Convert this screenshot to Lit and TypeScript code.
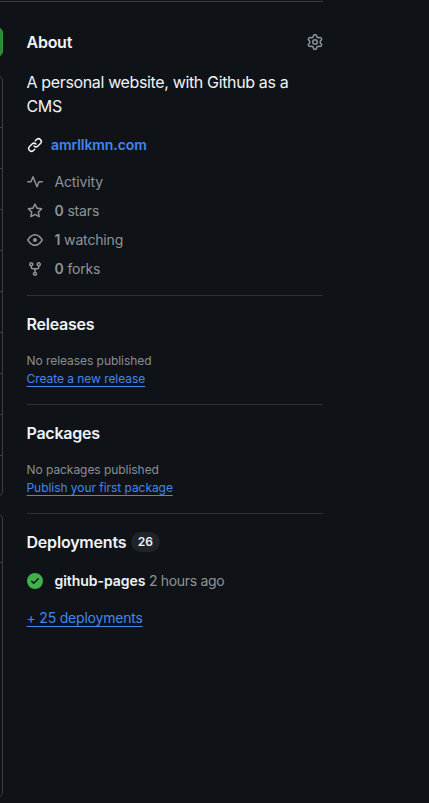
import { LitElement, html, css, svg } from "lit";
import { customElement } from "lit/decorators.js";

const paths = {
  gear: "M8 0a8.2 8.2 0 0 1 .701.031C9.444.095 9.99.645 10.16 1.29l.288 1.107c.018.066.079.158.212.224.231.114.454.243.668.386.123.082.233.09.299.071l1.103-.303c.644-.176 1.392.021 1.82.63.27.385.506.792.704 1.218.315.675.111 1.422-.364 1.891l-.814.806c-.049.048-.098.147-.088.294.016.257.016.515 0 .772-.01.147.038.246.088.294l.814.806c.475.469.679 1.216.364 1.891a7.977 7.977 0 0 1-.704 1.217c-.428.61-1.176.807-1.82.63l-1.102-.302c-.067-.019-.177-.011-.3.071a5.909 5.909 0 0 1-.668.386c-.133.066-.194.158-.211.224l-.29 1.106c-.168.646-.715 1.196-1.458 1.26a8.006 8.006 0 0 1-1.402 0c-.743-.064-1.289-.614-1.458-1.26l-.289-1.106c-.018-.066-.079-.158-.212-.224a5.738 5.738 0 0 1-.668-.386c-.123-.082-.233-.09-.299-.071l-1.103.303c-.644.176-1.392-.021-1.82-.63a8.12 8.12 0 0 1-.704-1.218c-.315-.675-.111-1.422.363-1.891l.815-.806c.05-.048.098-.147.088-.294a6.214 6.214 0 0 1 0-.772c.01-.147-.038-.246-.088-.294l-.815-.806C.635 6.045.431 5.298.746 4.623a7.92 7.92 0 0 1 .704-1.217c.428-.61 1.176-.807 1.82-.63l1.102.302c.067.019.177.011.3-.071.214-.143.437-.272.668-.386.133-.066.194-.158.211-.224l.29-1.106C6.009.645 6.556.095 7.299.03 7.53.01 7.764 0 8 0Zm-.571 1.525c-.036.003-.108.036-.137.146l-.289 1.105c-.147.561-.549.967-.998 1.189-.173.086-.34.183-.5.29-.417.278-.97.423-1.529.27l-1.103-.303c-.109-.03-.175.016-.195.045-.22.312-.412.644-.573.99-.014.031-.021.11.059.19l.815.806c.411.406.562.957.53 1.456a4.709 4.709 0 0 0 0 .582c.032.499-.119 1.05-.53 1.456l-.815.806c-.081.08-.073.159-.059.19.162.346.353.677.573.989.02.03.085.076.195.046l1.102-.303c.56-.153 1.113-.008 1.53.27.161.107.328.204.501.29.447.222.85.629.997 1.189l.289 1.105c.029.109.101.143.137.146a6.6 6.6 0 0 0 1.142 0c.036-.003.108-.036.137-.146l.289-1.105c.147-.561.549-.967.998-1.189.173-.086.34-.183.5-.29.417-.278.97-.423 1.529-.27l1.103.303c.109.029.175-.016.195-.045.22-.313.411-.644.573-.99.014-.031.021-.11-.059-.19l-.815-.806c-.411-.406-.562-.957-.53-1.456a4.709 4.709 0 0 0 0-.582c-.032-.499.119-1.05.53-1.456l.815-.806c.081-.08.073-.159.059-.19a6.464 6.464 0 0 0-.573-.989c-.02-.03-.085-.076-.195-.046l-1.102.303c-.56.153-1.113.008-1.53-.27a4.44 4.44 0 0 0-.501-.29c-.447-.222-.85-.629-.997-1.189l-.289-1.105c-.029-.11-.101-.143-.137-.146a6.6 6.6 0 0 0-1.142 0ZM11 8a3 3 0 1 1-6 0 3 3 0 0 1 6 0ZM9.5 8a1.5 1.5 0 1 0-3.001.001A1.5 1.5 0 0 0 9.5 8Z",
  link: "m7.775 3.275 1.25-1.25a3.5 3.5 0 1 1 4.95 4.95l-2.5 2.5a3.5 3.5 0 0 1-4.95 0 .751.751 0 0 1 .018-1.042.751.751 0 0 1 1.042-.018 1.998 1.998 0 0 0 2.83 0l2.5-2.5a2.002 2.002 0 0 0-2.83-2.83l-1.25 1.25a.751.751 0 0 1-1.042-.018.751.751 0 0 1-.018-1.042Zm-4.69 9.64a1.998 1.998 0 0 0 2.83 0l1.25-1.25a.751.751 0 0 1 1.042.018.751.751 0 0 1 .018 1.042l-1.25 1.25a3.5 3.5 0 1 1-4.95-4.95l2.5-2.5a3.5 3.5 0 0 1 4.95 0 .751.751 0 0 1-.018 1.042.751.751 0 0 1-1.042.018 1.998 1.998 0 0 0-2.83 0l-2.5 2.5a1.998 1.998 0 0 0 0 2.83Z",
  pulse: "M6 2c.306 0 .582.187.696.471L10 10.731l1.304-3.26A.751.751 0 0 1 12 7h3.25a.75.75 0 0 1 0 1.5h-2.742l-1.812 4.528a.751.751 0 0 1-1.392 0L6 4.77 4.696 8.03A.75.75 0 0 1 4 8.5H.75a.75.75 0 0 1 0-1.5h2.742l1.812-4.529A.751.751 0 0 1 6 2Z",
  star: "M8 .25a.75.75 0 0 1 .673.418l1.882 3.815 4.21.612a.75.75 0 0 1 .416 1.279l-3.046 2.97.719 4.192a.751.751 0 0 1-1.088.791L8 12.347l-3.766 1.98a.75.75 0 0 1-1.088-.79l.72-4.194L.818 6.374a.75.75 0 0 1 .416-1.28l4.21-.611L7.327.668A.75.75 0 0 1 8 .25Zm0 2.445L6.615 5.5a.75.75 0 0 1-.564.41l-3.097.45 2.24 2.184a.75.75 0 0 1 .216.664l-.528 3.084 2.769-1.456a.75.75 0 0 1 .698 0l2.77 1.456-.53-3.084a.75.75 0 0 1 .216-.664l2.24-2.183-3.096-.45a.75.75 0 0 1-.564-.41L8 2.694Z",
  eye: "M8 2c1.981 0 3.671.992 4.933 2.078 1.27 1.091 2.187 2.345 2.637 3.023a1.62 1.62 0 0 1 0 1.798c-.45.678-1.367 1.932-2.637 3.023C11.67 13.008 9.981 14 8 14c-1.981 0-3.671-.992-4.933-2.078C1.797 10.83.88 9.576.43 8.898a1.62 1.62 0 0 1 0-1.798c.45-.677 1.367-1.931 2.637-3.022C4.33 2.992 6.019 2 8 2ZM1.679 7.932a.12.12 0 0 0 0 .136c.411.622 1.241 1.75 2.366 2.717C5.176 11.758 6.527 12.5 8 12.5c1.473 0 2.825-.742 3.955-1.715 1.124-.967 1.954-2.096 2.366-2.717a.12.12 0 0 0 0-.136c-.412-.621-1.242-1.75-2.366-2.717C10.824 4.242 9.473 3.5 8 3.5c-1.473 0-2.825.742-3.955 1.715-1.124.967-1.954 2.096-2.366 2.717ZM8 10a2 2 0 1 1-.001-3.999A2 2 0 0 1 8 10Z",
  fork: "M5 5.372v.878c0 .414.336.75.75.75h4.5a.75.75 0 0 0 .75-.75v-.878a2.25 2.25 0 1 1 1.5 0v.878a2.25 2.25 0 0 1-2.25 2.25h-1.5v2.128a2.251 2.251 0 1 1-1.5 0V8.5h-1.5A2.25 2.25 0 0 1 3.5 6.25v-.878a2.25 2.25 0 1 1 1.5 0ZM5 3.25a.75.75 0 1 0-1.5 0 .75.75 0 0 0 1.5 0Zm6.75.75a.75.75 0 1 0 0-1.5.75.75 0 0 0 0 1.5Zm-3 8.75a.75.75 0 1 0-1.5 0 .75.75 0 0 0 1.5 0Z",
  check: "M8 16A8 8 0 1 1 8 0a8 8 0 0 1 0 16Zm3.78-9.72a.751.751 0 0 0-.018-1.042.751.751 0 0 0-1.042-.018L6.75 9.19 5.28 7.72a.751.751 0 0 0-1.042.018.751.751 0 0 0-.018 1.042l2 2a.75.75 0 0 0 1.06 0Z",
};

const icon = (name: keyof typeof paths) =>
  html`<svg class="icon ${name}" viewBox="0 0 16 16" aria-hidden="true">${svg`<path d=${paths[name]}></path>`}</svg>`;

@customElement("app-root")
export class AppRoot extends LitElement {
  static styles = css`
    * { box-sizing: border-box; }
    :host {
      display: block;
      height: 803px;
      overflow: hidden;
      background: #0f1317;
      color: #f0f3f8;
      font: 400 14px/21px Inter, "Liberation Sans", sans-serif;
    }
    .top { width: 323px; height: 2px; border-bottom: 1px solid #393d43; }
    .page { display: grid; grid-template-columns: 3px 296.5px; column-gap: 23.5px; }
    .main { overflow: hidden; display: flex; flex-direction: column; align-items: flex-end; padding-top: 25px; }
    .main > * { width: 30px; flex: none; }
    .code { height: 30px; background: #2b8a37; border: 1px solid #3b9346; border-radius: 6px; }
    .box { border: 1px solid #3a3e44; border-radius: 6px; }
    .files { margin-top: 18px; height: 422px; }
    .row { height: 41px; border-bottom: 1px solid #3a3e44; }
    .row:first-child { height: 52px; }
    .readme { margin-top: 16px; height: 285px; }
    .readme .row { height: 49px; }
    .side { padding-top: 28px; }
    section { border-bottom: 1px solid #2b2f35; padding-bottom: 16px; margin-bottom: 16px; }
    section:last-child { border: 0; }
    h2 { margin: 0 0 16px; font-size: 16px; line-height: 24px; font-weight: 600; letter-spacing: -0.25px; }
    .head { display: flex; justify-content: space-between; }
    .head .icon { margin-top: 4px; color: #8c929b; }
    .desc { margin: 0 0 16px; font-size: 16px; line-height: 24px; letter-spacing: -0.355px; }
    .icon { width: 16px; height: 16px; flex: none; fill: currentColor; display: block; }
    .line { display: flex; align-items: center; height: 21px; color: #8f9399; letter-spacing: -0.15px; }
    .line + .line { margin-top: 8px; }
    .line .icon { margin-right: 12px; }
    .line b { font-weight: 600; }
    .line.site { color: #f0f3f8; margin-bottom: 16px; letter-spacing: -0.07px; }
    .line.site .icon { margin-right: 8.5px; }
    a { color: #4485f0; text-decoration: none; }
    .site a { font-weight: 600; }
    .small { font-size: 12px; line-height: 18px; color: #8a8e94; letter-spacing: -0.05px; }
    .small a, .more a { text-decoration: underline; text-decoration-thickness: 1px; text-underline-offset: 3px; }
    .count {
      display: inline-block; height: 20px; min-width: 29px; padding: 0 6px; border-radius: 10px;
      background: #202429; font-size: 12px; line-height: 20px; text-align: center; letter-spacing: 0;
    }
    h2.titled { display: flex; align-items: center; gap: 4.5px; height: 24px; letter-spacing: -0.2px; }
    .line.deploy { letter-spacing: -0.32px; }
    .line .check { color: #3fb24c; }
    .line .env { color: #f0f3f8; letter-spacing: -0.05px; }
    .more { margin-top: 16px; letter-spacing: -0.2px; }
  `;

  render() {
    return html`
      <div class="top"></div>
      <div class="page">
        <div class="main">
          <div class="code"></div>
          <div class="box files">${Array.from({ length: 9 }, () => html`<div class="row"></div>`)}</div>
          <div class="box readme"><div class="row"></div></div>
        </div>
        <aside class="side">
          <section>
            <div class="head"><h2>About</h2>${icon("gear")}</div>
            <p class="desc">A personal website, with Github as a CMS</p>
            <div class="line site">${icon("link")}<a>amrllkmn.com</a></div>
            <div class="line">${icon("pulse")}<span>Activity</span></div>
            <div class="line">${icon("star")}<span><b>0</b> stars</span></div>
            <div class="line">${icon("eye")}<span><b>1</b> watching</span></div>
            <div class="line">${icon("fork")}<span><b>0</b> forks</span></div>
          </section>
          <section>
            <h2>Releases</h2>
            <div class="small">No releases published</div>
            <div class="small"><a>Create a new release</a></div>
          </section>
          <section>
            <h2>Packages</h2>
            <div class="small">No packages published</div>
            <div class="small"><a>Publish your first package</a></div>
          </section>
          <section>
            <h2 class="titled">Deployments <span class="count">26</span></h2>
            <div class="line deploy">${icon("check")}<span><b class="env">github-pages</b> 2 hours ago</span></div>
            <div class="more"><a>+ 25 deployments</a></div>
          </section>
        </aside>
      </div>
    `;
  }
}
